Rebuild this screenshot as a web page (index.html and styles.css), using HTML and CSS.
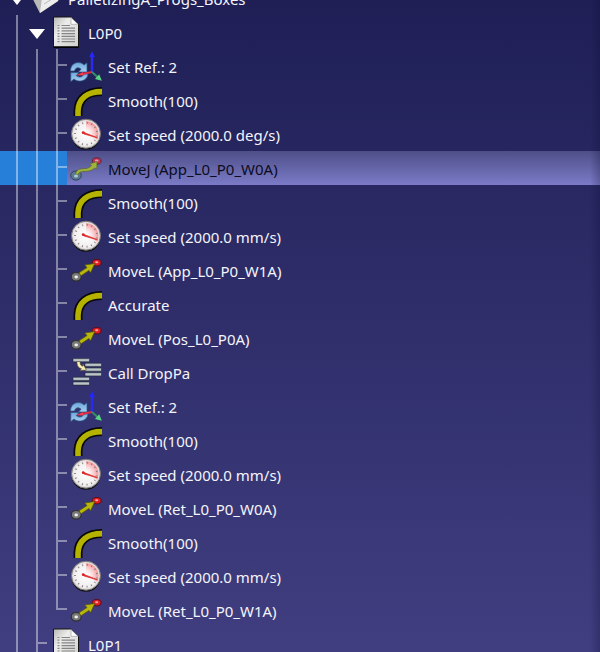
FILE: index.html
```
<!DOCTYPE html>
<html lang="en">
<head>
<meta charset="utf-8">
<title>Program tree</title>
<link rel="stylesheet" href="styles.css">
</head>
<body>
<svg class="defs" aria-hidden="true">
  <defs>
    <linearGradient id="paper" x1="0" y1="0" x2="1" y2="1"><stop offset="0" stop-color="#b5b5b5"/><stop offset=".35" stop-color="#ececea"/><stop offset="1" stop-color="#cfcfcd"/></linearGradient>
    <linearGradient id="sync" x1="0" y1="0" x2="0" y2="1"><stop offset="0" stop-color="#6ea6da"/><stop offset="1" stop-color="#a5d0f2"/></linearGradient>
    <radialGradient id="dial"><stop offset="0" stop-color="#fff"/><stop offset=".8" stop-color="#f1efef"/><stop offset="1" stop-color="#cfcccc"/></radialGradient>
    <radialGradient id="zone" gradientUnits="userSpaceOnUse" cx="16" cy="15.7" r="12.5"><stop offset="0" stop-color="#fff" stop-opacity="0"/><stop offset="1" stop-color="#f88f94"/></radialGradient>
    <linearGradient id="box" x1="0" y1="0" x2="1" y2="0"><stop offset="0" stop-color="#c9c9c9"/><stop offset="1" stop-color="#f7f7f7"/></linearGradient>
    <symbol id="i-box" viewBox="0 0 32 32">
      <path d="M1 13 16 2l15 8-3 9-18 12Z" fill="url(#box)" stroke="#444" stroke-width=".6"/>
      <path d="M1 13 10 31 12 17Z" fill="#b9b9b9"/><path d="M12 17 10 31 28 19 31 10Z" fill="#ededed"/>
      <path d="M14 22 27 14" stroke="#bbb" stroke-width="1"/>
    </symbol>
    <symbol id="i-doc" viewBox="0 0 32 32">
      <path d="M3.500 1H21l7.500 7.500V31h-25Z" fill="url(#paper)" stroke="#151515" stroke-width="1"/>
      <path d="M3.500 31.200h25" stroke="#000" stroke-width="1.500"/>
      <path d="M21 1.500v6.800h7Z" fill="#fff" stroke="#999" stroke-width=".6"/>
      <path d="M7.500 9.500h2M7.500 12.200h2M7.500 14.900h2M7.500 17.600h2M7.500 20.300h2M7.500 23h2M7.500 25.700h2" stroke="#888" stroke-width="1.200"/>
      <path d="M11.500 9.500H20M11.500 12.200h13.500M11.500 14.900h13.500M11.500 17.600h13.500M11.500 20.300h13.500M11.500 23h13.500M11.500 25.700h13.500" stroke="#858585" stroke-width="1.200"/>
    </symbol>
    <symbol id="i-ref" viewBox="0 0 32 32">
      <path d="M.5 21C.5 12 10 10.500 14 15l3-2.200V22H8.500l2.600-2.800C8 16.500 5 18 4.500 21Z" fill="url(#sync)" stroke="#2f5784" stroke-width=".7"/>
      <path d="M18 24c-.5 7-9.500 9-14 5L.8 31.500V22.500H9L6.300 25.600c3.200 2.600 6.500 1.400 7.500-1.600Z" fill="url(#sync)" stroke="#2f5784" stroke-width=".7"/>
      <path d="M22 22V6" stroke="#2a2af2" stroke-width="2.400"/>
      <path d="M22 1 24.800 7h-5.600Z" fill="#2525ff"/>
      <path d="M22 22 12 24" stroke="#e02b45" stroke-width="2"/>
      <path d="M6 25.200 13 22 13.500 25.600Z" fill="#f63c4d"/>
      <path d="M22 22 27.500 27" stroke="#378c68" stroke-width="2"/>
      <path d="M31.800 30.800 29.200 24.200 25 29Z" fill="#58d782"/>
    </symbol>
    <symbol id="i-curve" viewBox="0 0 32 32">
      <path d="M8 32V27C8.500 14.500 17 7.600 32 7.600" fill="none" stroke="#090909" stroke-width="9"/>
      <path d="M8 32V27C8.500 14.500 17 7.600 32 7.600" fill="none" stroke="#b5b300" stroke-width="5.600"/>
    </symbol>
    <symbol id="i-gauge" viewBox="0 0 32 32">
      <ellipse cx="16" cy="17" rx="14.500" ry="14.800" fill="#111"/>
      <circle cx="16" cy="15.700" r="14.500" fill="url(#dial)" stroke="#7b7676" stroke-width="1"/>
      <path d="M16 15.700V3.200A12.500 12.500 0 0 1 27 21.500Z" fill="url(#zone)"/>
      <circle cx="16" cy="15.700" r="11" fill="none" stroke="#8b7d7d" stroke-width="1.800" stroke-dasharray="1 3.600" transform="rotate(130 16 15.700)" pathLength="69"/>
      <path d="M14 14.500 27.500 19.800 14 16Z" fill="#e22" stroke="#d33" stroke-width=".8"/>
      <circle cx="13.200" cy="14.700" r="1.400" fill="#d22"/>
    </symbol>
    <symbol id="i-movej" viewBox="0 0 32 32">
      <ellipse cx="26.700" cy="9" rx="4.400" ry="3.200" fill="#c83254" stroke="#56283f"/>
      <ellipse cx="26.700" cy="8.700" rx="1.800" ry="1.100" fill="#e99aae"/>
      <ellipse cx="6" cy="23.500" rx="5.300" ry="4.600" fill="#5a7993" stroke="#2e4358"/>
      <path d="M5.500 22C7 16 12 17 16 16.500c3-.4 4-1.500 5.500-3l-2-1.500 7.500-2.500-.2 7.500-2-1C21 19 19 19.200 15 19.300c-4 .1-6 .7-7 3.700Z" fill="#a0b43b" stroke="#59672f" stroke-width=".7"/>
      <ellipse cx="6" cy="24" rx="2" ry="1.600" fill="#b4c7d3"/>
    </symbol>
    <symbol id="i-movel" viewBox="0 0 32 32">
      <ellipse cx="26.700" cy="8.700" rx="4.400" ry="3.200" fill="#e01e24" stroke="#5a0b14"/>
      <ellipse cx="26.700" cy="8.300" rx="1.600" ry="1" fill="#ffaaa8"/>
      <ellipse cx="6.200" cy="22.800" rx="5" ry="4.300" fill="#777" stroke="#2f2f2f" stroke-width="1.200"/>
      <path d="M9 18.800 17 13.600 14.800 11 24.800 9.500 20.600 18.600 18.900 16.400 11 21.800Z" fill="#b9b70a" stroke="#55540c" stroke-width=".7"/>
      <ellipse cx="6.200" cy="23" rx="1.800" ry="1.400" fill="#efefef"/>
    </symbol>
    <symbol id="i-call" viewBox="0 0 32 32">
      <g fill="#b9c5c8" stroke="#22262d" stroke-width=".6">
        <rect x="3" y="2.600" width="16.500" height="3.200" rx=".8"/><rect x="15" y="7.200" width="16.500" height="3.200" rx=".8"/><rect x="15" y="12" width="16.500" height="3.200" rx=".8"/><rect x="15" y="16.700" width="16.500" height="3.200" rx=".8"/><rect x="3" y="21.200" width="16.500" height="3.200" rx=".8"/><rect x="3" y="25.900" width="16.500" height="3.200" rx=".8"/>
      </g>
      <path d="M7 5.500h3c0 3 .8 4.500 3 4.700L12.800 8l3.700 6-6.500.5 1.500-1.800C8 12 6.800 9 7 5.500Z" fill="#fbeeb4" stroke="#5d5331" stroke-width=".6"/>
    </symbol>
  </defs>
</svg>
<main class="panel">
  <ul class="tree">
    <li class="node">
      <div class="row"><button class="toggle" type="button" aria-label="Collapse PalletizingA_Progs_Boxes"></button><svg class="icon"><use href="#i-box"/></svg><span class="label">PalletizingA_Progs_Boxes</span></div>
      <ul class="group">
        <li class="node">
          <div class="row"><button class="toggle" type="button" aria-label="Collapse L0P0"></button><svg class="icon"><use href="#i-doc"/></svg><span class="label">L0P0</span></div>
          <ul class="group leaves">
            <li class="row leaf"><svg class="icon"><use href="#i-ref"/></svg><span class="label">Set Ref.: 2</span></li>
            <li class="row leaf"><svg class="icon"><use href="#i-curve"/></svg><span class="label">Smooth(100)</span></li>
            <li class="row leaf"><svg class="icon"><use href="#i-gauge"/></svg><span class="label">Set speed (2000.0 deg/s)</span></li>
            <li class="row leaf selected"><svg class="icon"><use href="#i-movej"/></svg><span class="label">MoveJ (App_L0_P0_W0A)</span></li>
            <li class="row leaf"><svg class="icon"><use href="#i-curve"/></svg><span class="label">Smooth(100)</span></li>
            <li class="row leaf"><svg class="icon"><use href="#i-gauge"/></svg><span class="label">Set speed (2000.0 mm/s)</span></li>
            <li class="row leaf"><svg class="icon"><use href="#i-movel"/></svg><span class="label">MoveL (App_L0_P0_W1A)</span></li>
            <li class="row leaf"><svg class="icon"><use href="#i-curve"/></svg><span class="label">Accurate</span></li>
            <li class="row leaf"><svg class="icon"><use href="#i-movel"/></svg><span class="label">MoveL (Pos_L0_P0A)</span></li>
            <li class="row leaf"><svg class="icon"><use href="#i-call"/></svg><span class="label">Call DropPa</span></li>
            <li class="row leaf"><svg class="icon"><use href="#i-ref"/></svg><span class="label">Set Ref.: 2</span></li>
            <li class="row leaf"><svg class="icon"><use href="#i-curve"/></svg><span class="label">Smooth(100)</span></li>
            <li class="row leaf"><svg class="icon"><use href="#i-gauge"/></svg><span class="label">Set speed (2000.0 mm/s)</span></li>
            <li class="row leaf"><svg class="icon"><use href="#i-movel"/></svg><span class="label">MoveL (Ret_L0_P0_W0A)</span></li>
            <li class="row leaf"><svg class="icon"><use href="#i-curve"/></svg><span class="label">Smooth(100)</span></li>
            <li class="row leaf"><svg class="icon"><use href="#i-gauge"/></svg><span class="label">Set speed (2000.0 mm/s)</span></li>
            <li class="row leaf"><svg class="icon"><use href="#i-movel"/></svg><span class="label">MoveL (Ret_L0_P0_W1A)</span></li>
          </ul>
        </li>
        <li class="node">
          <div class="row leaf closed"><svg class="icon"><use href="#i-doc"/></svg><span class="label">L0P1</span></div>
        </li>
      </ul>
    </li>
  </ul>
</main>
</body>
</html>
```

FILE: styles.css
```
:root {
  --row: 34px;
  --step: 20px;
  --line: rgba(255, 255, 255, .42);
}
* { box-sizing: border-box; }
body {
  margin: 0;
  font-family: "Noto Sans", "Open Sans", sans-serif;
  font-size: 15px;
  color: #f4f4fa;
}
.defs { position: absolute; width: 0; height: 0; }
.panel {
  position: relative;
  height: 100vh;
  overflow: hidden;
  background: linear-gradient(#1f1f56, #403e80);
}
.panel::after {
  content: "";
  position: absolute;
  inset: 0 0 0 auto;
  width: 10px;
  background: linear-gradient(to right, transparent, rgba(10, 10, 50, .25));
}
ul { list-style: none; margin: 0; padding: 0; }
.tree { margin-top: -19px; padding-left: 10px; }
.group { position: relative; padding-left: var(--step); }
/* vertical guides: one below the parent's arrow, one joining its leaves */
.group::before,
.leaves::after,
.closed::after {
  content: "";
  position: absolute;
  z-index: 1;
  top: 0;
  bottom: 0;
  left: 6px;
  width: 2px;
  background: var(--line);
}
.leaves::after { left: 26px; bottom: 17px; }
.row {
  position: relative;
  display: flex;
  align-items: center;
  height: var(--row);
}
.toggle {
  width: var(--step);
  height: var(--row);
  padding: 4px 0 0;
  border: 0;
  background: none;
}
.toggle::before {
  content: "";
  display: block;
  width: 16px;
  height: 10px;
  margin-left: -1px;
  background: #fff;
  clip-path: polygon(0 0, 100% 0, 50% 100%);
}
.icon { flex: none; width: 32px; height: 32px; }
.label {
  margin-left: 6px;
  padding-top: 2px;
  line-height: 20px;
  white-space: nowrap;
}
.leaf { padding-left: var(--step); }
/* short branch from the guide to the item */
.leaf::before {
  content: "";
  position: absolute;
  z-index: 1;
  top: 15px;
  left: 8px;
  width: 9px;
  height: 2px;
  background: var(--line);
}
.selected {
  color: #0c0c1c;
  margin-left: -50px;
  padding-left: 70px;
  background: linear-gradient(to right, #2680da 67px, transparent 67px), linear-gradient(#4e4f88, #7b7bc8);
}
.selected::before { left: 58px; }
```
